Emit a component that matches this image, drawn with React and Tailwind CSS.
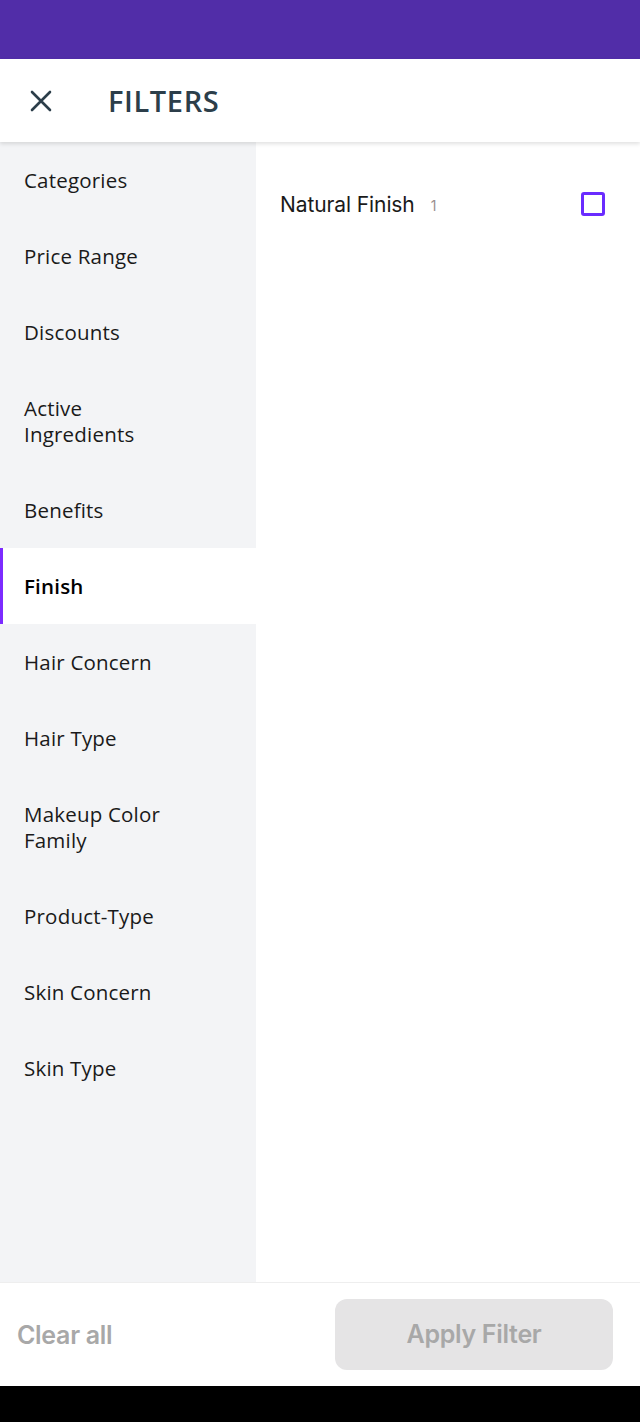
import React from "react";

const items = [
  "Categories",
  "Price Range",
  "Discounts",
  "Active Ingredients",
  "Benefits",
  "Finish",
  "Hair Concern",
  "Hair Type",
  "Makeup Color Family",
  "Product-Type",
  "Skin Concern",
  "Skin Type",
];

const mont = { fontFamily: '"Open Sans", "DejaVu Sans", sans-serif' };

export default function App() {
  return (
    <div className="w-[640px] h-[1422px] flex flex-col bg-white overflow-hidden">
      <div className="h-[59px] bg-[#512da8] shrink-0" />
      <div className="h-[83px] shrink-0 flex items-center bg-white shadow-[0_2px_4px_rgba(0,0,0,0.12)] relative z-10">
        <div className="w-[108px] pl-[29px] flex items-center">
          <svg width="24" height="24" viewBox="0 0 24 24" fill="none" stroke="#2c3e4a" strokeWidth="2.6" strokeLinecap="round">
            <path d="M3 3L21 21M21 3L3 21" />
          </svg>
        </div>
        <div className="text-[29px] font-semibold text-[#2c3e4a] tracking-[0.6px]" style={mont}>FILTERS</div>
      </div>
      <div className="flex flex-1 min-h-0">
        <div className="w-[256px] bg-[#f3f4f6] flex flex-col">
          {items.map((it) => {
            const active = it === "Finish";
            return (
              <div
                key={it}
                className={`pl-6 pr-4 py-[25px] text-[20.5px] leading-[26px] tracking-[0.2px] ${active ? "bg-white border-l-[3px] border-[#7c2bff] pl-[21px] font-semibold text-black" : "text-[#1a1a1a]"}`}
                style={mont}
              >
                {it === "Active Ingredients" ? (<>Active<br />Ingredients</>) : it === "Makeup Color Family" ? (<>Makeup Color<br />Family</>) : it}
              </div>
            );
          })}
        </div>
        <div className="flex-1 bg-white">
          <div className="flex items-center h-[126px] pl-6 pr-[35px]">
            <span className="text-[21px] text-[#1a1a1a] tracking-[-0.1px]" style={{ fontFamily: 'Inter, sans-serif' }}>Natural Finish</span>
            <span className="ml-[16px] text-[14px] text-[#9a9090]" style={{ fontFamily: 'Inter, sans-serif' }}>1</span>
            <div className="ml-auto w-[24px] h-[24px] border-[3px] border-[#6a2bff] rounded-[3px] -mt-[3px]" />
          </div>
        </div>
      </div>
      <div className="h-[104px] shrink-0 border-t border-[#eeeeee] bg-white flex items-center justify-between pl-[17px] pr-[27px] pt-[3px]" style={{ fontFamily: 'Inter, sans-serif' }}>
        <span className="text-[25px] font-semibold text-[#a8a8a8] tracking-[-0.3px]">Clear all</span>
        <div className="w-[278px] h-[71px] -mt-[3px] rounded-[12px] bg-[#e5e4e5] flex items-center justify-center text-[25px] font-semibold text-[#a8a8a8] tracking-[-0.3px]">Apply Filter</div>
      </div>
      <div className="h-[36px] bg-black shrink-0" />
    </div>
  );
}
